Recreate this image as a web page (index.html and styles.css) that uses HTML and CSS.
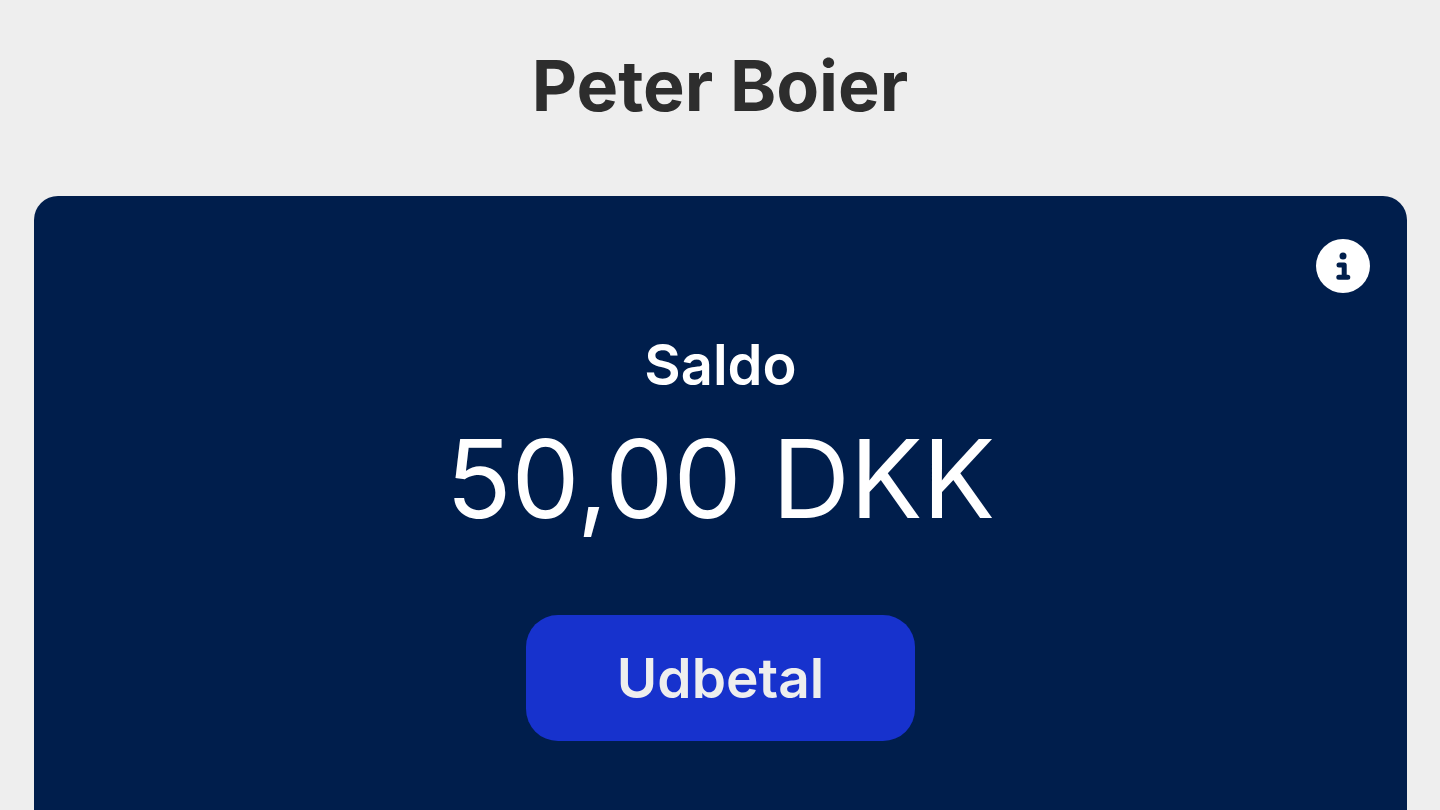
FILE: index.html
```html
<!DOCTYPE html>
<html lang="da">
<head>
  <meta charset="UTF-8" />
  <meta name="viewport" content="width=device-width, initial-scale=1.0"/>
  <title>Peter Boier</title>
  <link rel="stylesheet" href="styles.css">
</head>
<body>
  <h1>Peter Boier</h1>

  <main class="card">
    <button class="info" aria-label="Info">
      <svg viewBox="0 0 54 54" aria-hidden="true">
        <circle cx="27" cy="27" r="27" fill="#fff"/>
        <circle cx="27" cy="17" r="3.5" fill="#001e4c"/>
        <path d="M23 26H28.2V38M22.8 38.2H31.8" fill="none" stroke="#001e4c" stroke-width="5" stroke-linecap="round" stroke-linejoin="round"/>
      </svg>
    </button>
    <h2>Saldo</h2>
    <p class="amount">50,00 DKK</p>
    <button class="payout">Udbetal</button>
  </main>
</body>
</html>
```

FILE: styles.css
```css
body {
  margin: 0;
  min-height: 100vh;
  display: flex;
  flex-direction: column;
  font-family: 'Inter', sans-serif;
  background: #eee;
}

h1 {
  margin: 0;
  padding: 38px 0 62px;
  color: #2d2d2d;
  font-size: 70px;
  font-weight: 700;
  line-height: 96px;
  text-align: center;
}

.card {
  flex: 1;
  display: flex;
  flex-direction: column;
  align-items: center;
  margin: 0 33px 0 34px;
  padding: 43px 37px 69px;
  border-radius: 24px 24px 0 0;
  background: #001e4c;
  color: #fff;
}

button {
  border: none;
  font-family: inherit;
  cursor: pointer;
}

.info {
  align-self: flex-end;
  width: 54px;
  height: 54px;
  padding: 0;
  border-radius: 50%;
  background: none;
}

.info svg {
  display: block;
  width: 100%;
}

h2 {
  margin: 36px 0 0;
  font-size: 56px;
  font-weight: 600;
  line-height: 72px;
}

.amount {
  margin: 10px 0 0;
  font-size: 108px;
  line-height: 136px;
}

.payout {
  padding: 28px 91px;
  margin-top: 68px;
  border-radius: 32px;
  background: #1732cd;
  color: #eee;
  font-size: 55px;
  font-weight: 600;
  line-height: 70px;
}
```
